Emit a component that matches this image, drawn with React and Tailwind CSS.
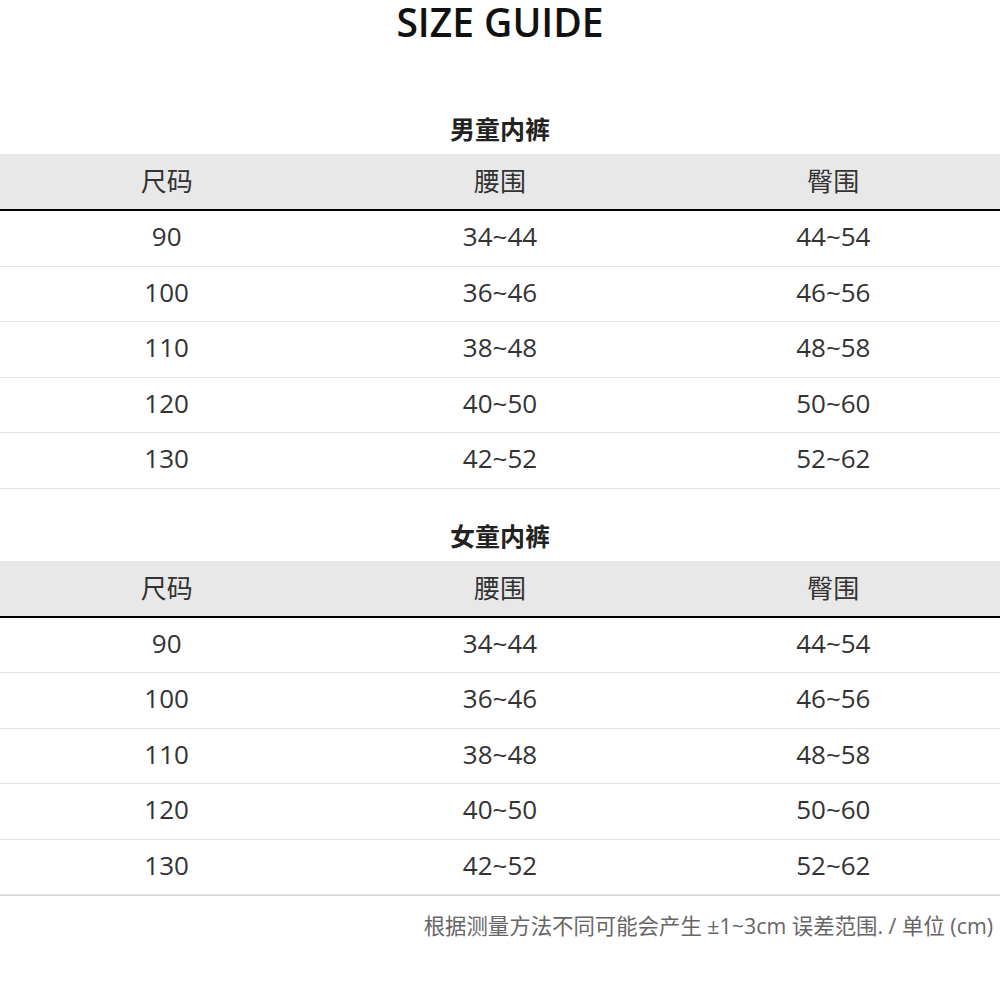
import React from "react"

const rows = [
    ["90", "34~44", "44~54"],
    ["100", "36~46", "46~56"],
    ["110", "38~48", "48~58"],
    ["120", "40~50", "50~60"],
    ["130", "42~52", "52~62"],
]

function SizeTable({ title }) {
    return (
        <div>
            <div className="h-[72px] pt-[22px] text-center text-[25px] font-bold leading-[50px] text-[#222]">
                {title}
            </div>
            <div className="grid h-[57px] grid-cols-3 items-center border-b-2 border-black bg-[#e8e8e8] text-center text-[26px] text-[#333]">
                <div>尺码</div>
                <div>腰围</div>
                <div>臀围</div>
            </div>
            {rows.map(r => (
                <div
                    key={r[0]}
                    className="grid h-[55.5px] grid-cols-3 items-center border-b border-[#e3e3e3] pb-[3px] text-center text-[26px] text-[#333]"
                >
                    <div>{r[0]}</div>
                    <div>{r[1]}</div>
                    <div>{r[2]}</div>
                </div>
            ))}
        </div>
    )
}

export default function App() {
    return (
        <div
            className="w-[1000px] bg-white"
            style={{ fontFamily: '"Open Sans", "Noto Sans CJK SC", sans-serif' }}
        >
            <h1 className="h-[82px] text-center text-[39px] font-semibold leading-[44px] text-[#111]">
                SIZE GUIDE
            </h1>
            <SizeTable title="男童内裤" />
            <SizeTable title="女童内裤" />
            <div className="border-t border-[#d4d4d4] pr-[7px] pt-[14px] text-right text-[21.4px] text-[#666]">
                根据测量方法不同可能会产生 ±1~3cm 误差范围. / 单位 (cm)
            </div>
        </div>
    )
}
